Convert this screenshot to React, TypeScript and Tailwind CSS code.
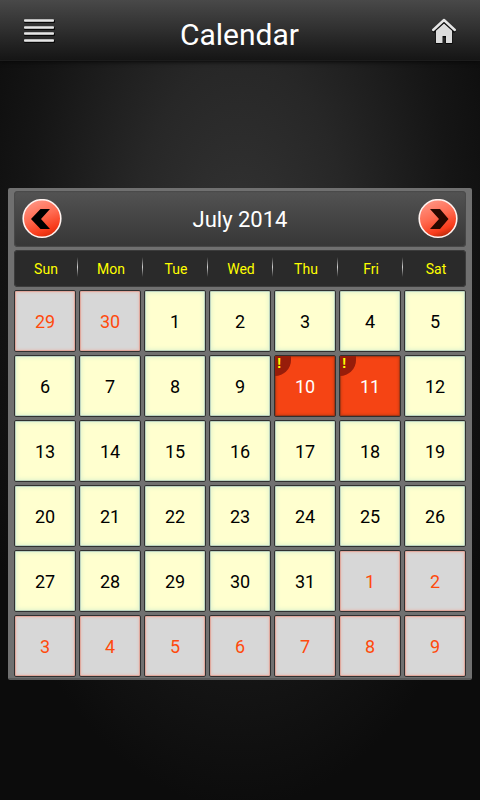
type Kind = "other" | "current" | "event";

interface Day {
  label: number;
  kind: Kind;
}

const weekdays = ["Sun", "Mon", "Tue", "Wed", "Thu", "Fri", "Sat"];

const eventDays = [10, 11];

// Six full weeks, starting on Sunday 29 June 2014.
const weeks: Day[][] = Array.from({ length: 6 }, (_, week) =>
  Array.from({ length: 7 }, (_, weekday): Day => {
    const n = week * 7 + weekday - 1;
    if (n < 1) return { label: n + 30, kind: "other" };
    if (n > 31) return { label: n - 31, kind: "other" };
    return { label: n, kind: eventDays.includes(n) ? "event" : "current" };
  }),
);

const cellStyles: Record<Kind, string> = {
  other:
    "bg-[#d7d7d7] text-[#ff4a0c] shadow-[inset_0_0_0_1px_#dfa79c,inset_0_0_3px_1px_#e6b8ae]",
  current:
    "bg-[#ffffcf] text-black shadow-[inset_0_0_0_1px_#bcd3bf,inset_0_0_5px_1px_#d8efcd]",
  event:
    "bg-[#f54414] text-white shadow-[inset_0_0_0_1px_#a93512,inset_0_0_3px_1px_#b63a14]",
};

function MenuIcon() {
  return (
    <svg viewBox="0 0 32 26" className="h-[26px] w-8" aria-hidden="true">
      {[1, 8, 14, 21].map((y) => (
        <g key={y}>
          <rect x="1" y={y + 1} width="31" height="3" rx="1" fill="#080808" />
          <rect x="1" y={y} width="30" height="3" rx="1" fill="#8c8c8c" />
          <rect x="1" y={y + 0.5} width="30" height="2" rx="1" fill="#e6e6e6" />
        </g>
      ))}
    </svg>
  );
}

function HomeIcon() {
  return (
    <svg viewBox="0 0 24 26" className="h-[26px] w-6" aria-hidden="true">
      <g fill="#080808" stroke="#080808">
        <path d="M4 14 12 6.500 20 14V26H14V19H10V26H4Z" strokeWidth="1" />
        <path d="M1 14 12 3.500 23 14" fill="none" strokeWidth="3" />
      </g>
      <path
        d="M12 5.500 20 12.800V24.500Q20 25 19.500 25H14V18H10.500V25H4.500Q4 25 4 24.500V12.800Z"
        fill="#dcdcdc"
      />
      <path d="M2 13 12 4 22 13" fill="none" stroke="#151515" strokeWidth="1.600" />
      <path
        d="M1.200 12 12 2 22.800 12"
        fill="none"
        stroke="#e6e6e6"
        strokeWidth="2.400"
        strokeLinejoin="round"
        strokeLinecap="round"
      />
    </svg>
  );
}

function MonthArrow({ direction }: { direction: "previous" | "next" }) {
  const next = direction === "next";
  return (
    <button
      type="button"
      aria-label={next ? "Next month" : "Previous month"}
      className="size-10 shrink-0 rounded-full"
    >
      <svg viewBox="0 0 40 40" className="size-10" aria-hidden="true">
        <defs>
          <linearGradient id={`fill-${direction}`} x1="0.3" y1="0" x2="0.7" y2="1">
            <stop offset="0" stopColor="#ff9584" />
            <stop offset="0.45" stopColor="#ff6a50" />
            <stop offset="0.8" stopColor="#f83c1b" />
            <stop offset="1" stopColor={next ? "#a82808" : "#d92a08"} />
          </linearGradient>
        </defs>
        <circle
          cx="20"
          cy="19.500"
          r="18.800"
          fill={`url(#fill-${direction})`}
          stroke="#fff3f0"
          strokeWidth="1.600"
        />
        <path
          d={next ? "M12 10H22L30.500 20 22 30H12L21 20Z" : "M28 10H18.500L9 20 18.500 30H28L19 20Z"}
          fill={next ? "#280800" : "#000"}
        />
      </svg>
    </button>
  );
}

function DayCell({ day }: { day: Day }) {
  return (
    <td className="p-0">
      <button
        type="button"
        className={`relative flex aspect-square w-full items-center justify-center overflow-hidden rounded-xs border border-[#303030] pt-0.5 text-lg leading-6 ${cellStyles[day.kind]}`}
      >
        {day.label}
        {day.kind === "event" && (
          <span className="absolute top-0 left-0 h-5 w-4 rounded-br-full bg-[#971d0a] text-left font-['Liberation_Mono',monospace] text-sm leading-4 font-bold text-[#ffff00]">
            !
          </span>
        )}
      </button>
    </td>
  );
}

export default function App() {
  return (
    <div className="flex min-h-screen flex-col bg-[#0d0d0d] bg-[radial-gradient(ellipse_60%_68%_at_50%_33%,#343434_0%,#272727_38%,#151515_75%,#0c0c0c_100%)] font-[Roboto,sans-serif]">
      <header className="flex h-[61px] items-center justify-between border-b border-[#1c1c1c] bg-linear-to-b from-[#494949] via-[#2f2f2f] to-[#151515] px-6 shadow-[0_1px_4px_#080808]">
        <button type="button" aria-label="Menu" className="-ml-px flex-1 pt-0.5">
          <MenuIcon />
        </button>
        <h1 className="pt-2.5 text-3xl text-white">Calendar</h1>
        <button type="button" aria-label="Home" className="flex flex-1 justify-end pt-0.5">
          <HomeIcon />
        </button>
      </header>

      <main className="px-2 pt-[127px] pb-20">
        <section
          aria-label="July 2014"
          className="flex flex-col gap-[3px] rounded-xs border-b-2 border-[#5c5c5c] bg-[#707070] px-1.5 pt-[3px] pb-[1px]"
        >
          <div className="flex h-14 items-center justify-between rounded-sm bg-linear-to-b from-[#535353] to-[#363636] px-2 shadow-[inset_0_0_1px_1px_#4a4a4a]">
            <MonthArrow direction="previous" />
            <h2 className="pt-0.5 text-[22px] leading-7 text-white">July 2014</h2>
            <MonthArrow direction="next" />
          </div>

          <table className="flex flex-col gap-[3px]">
            <thead className="block rounded-sm bg-[#2a2a2a] shadow-[inset_0_0_0_1px_#3c3c3c]">
              <tr className="grid h-[37px] grid-cols-7 items-center gap-[3px]">
                {weekdays.map((name) => (
                  <th
                    key={name}
                    scope="col"
                    className="group flex items-center p-0 text-sm leading-5 font-normal text-[#ffff00]"
                  >
                    <span className="flex-1 pl-px text-center">{name}</span>
                    <span className="-mr-0.5 mb-1 h-5 w-px bg-linear-to-b from-[#2a2a2a] via-[#d0d0d0] to-[#2a2a2a] group-last:invisible" />
                  </th>
                ))}
              </tr>
            </thead>
            <tbody className="flex flex-col gap-[3px]">
              {weeks.map((week, i) => (
                <tr key={i} className="grid grid-cols-7 gap-[3px]">
                  {week.map((day) => (
                    <DayCell key={day.label} day={day} />
                  ))}
                </tr>
              ))}
            </tbody>
          </table>
        </section>
      </main>
    </div>
  );
}
